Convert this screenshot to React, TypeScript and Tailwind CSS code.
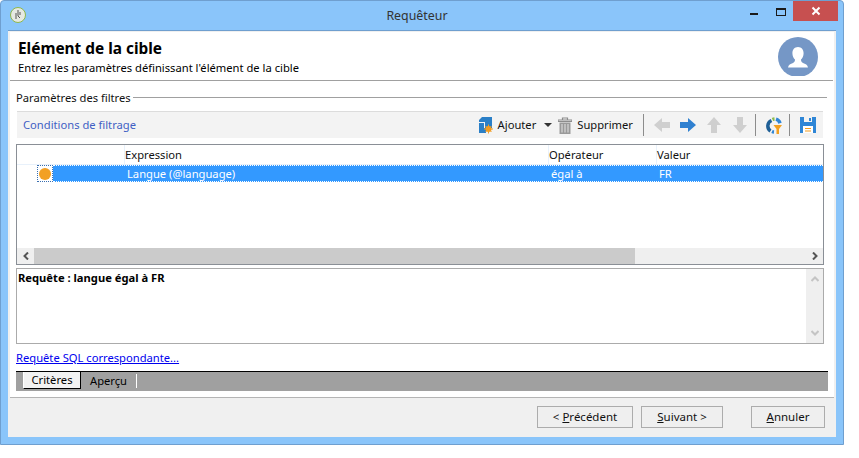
import React from "react";

function Arrow({ dir, color }: { dir: "l" | "r" | "u" | "d"; color: string }) {
  const rot = { r: 0, d: 90, l: 180, u: 270 }[dir];
  return (
    <svg width="16" height="16" viewBox="0 0 16 16" className="block">
      <polygon points="0,5 8,5 8,1 16,8 8,15 8,11 0,11" fill={color} transform={`rotate(${rot} 8 8)`} />
    </svg>
  );
}

function Sep() {
  return <div className="w-px h-[22px] bg-[#8c8c8c]" />;
}

function Btn({ w, children, ml }: { w: string; children: React.ReactNode; ml: string }) {
  return (
    <button className={`${w} ${ml} h-[22px] border border-[#acacac] bg-[#efefef] text-[11.5px] text-[#111] flex items-center justify-center`}>
      {children}
    </button>
  );
}

export default function App() {
  return (
    <div className="w-[859px] h-[458px] bg-white font-['Noto_Sans','Open_Sans',sans-serif] text-[11.2px] text-[#111] leading-none">
      <div className="w-[844px] h-[445px] rounded-t-[4px] border border-[#6f9fcf] bg-[#8ac5fa] flex flex-col">
        {/* title bar */}
        <div className="h-[29px] flex items-start shrink-0">
          <div className="ml-[9px] mt-[6px] w-4 h-4 rounded-full bg-[#e6e9e2] border border-[#8fb84a] flex items-center justify-center shrink-0">
            <svg width="10" height="12" viewBox="0 0 10 12"><path d="M3 4v6M5 1v6l2 2M7 3v3" stroke="#555" strokeWidth="1" fill="none" /></svg>
          </div>
          <div className="flex-1 text-center pt-[9px] text-[12.4px] text-[#333] pl-[58px]">Requêteur</div>
          <div className="flex items-start mr-[5px] shrink-0">
            <div className="w-[8px] h-[2px] bg-[#1a1a1a] mt-[12px] mr-[18px]" />
            <div className="w-[10px] h-[8px] border border-[#1a1a1a] border-t-2 mt-[7px] mr-[7px]" />
            <div className="w-[45px] h-[20px] bg-[#c75050] flex items-center justify-center">
              <svg width="10" height="10" viewBox="0 0 10 10"><path d="M1.500 1.500l7 7M8.500 1.500l-7 7" stroke="#fff" strokeWidth="2" /></svg>
            </div>
          </div>
        </div>
        {/* client */}
        <div className="mx-[7px] h-[407px] border-t border-[#6f9fcf] bg-[#f0f0f0] pt-px flex flex-col">
          <div className="mx-[2px] flex-1 bg-white flex flex-col">
            {/* header */}
            <div className="h-[49px] mr-px border-b border-[#a0a0a0] flex justify-between shrink-0">
              <div className="pl-[8px]">
                <div className="text-[15.400px] font-bold text-black pt-[9px]">Elément de la cible</div>
                <div className="text-black mt-[6px]">Entrez les paramètres définissant l'élément de la cible</div>
              </div>
              <div className="w-[40px] h-[39px] mt-[5px] mr-[15px] overflow-hidden">
                <svg width="40" height="40" viewBox="0 0 40 40">
                  <circle cx="20" cy="20" r="20" fill="#7597c6" />
                  <path d="M20 10c-3.600 0-5.600 2.800-5.600 6.200 0 2.600 1.200 5 2.600 6.400 0 1.600-.4 2.600-2 3.400-2.400 1-4.600 1.600-5 4.400h20c-.4-2.800-2.600-3.400-5-4.400-1.600-.8-2-1.800-2-3.400 1.400-1.400 2.600-3.800 2.600-6.400C25.600 12.800 23.600 10 20 10z" fill="#fff" />
                </svg>
              </div>
            </div>
            {/* fieldset title */}
            <div className="pl-[6px] pr-[7px] mt-[10px] flex items-center h-[13px] shrink-0">
              <span>Paramètres des filtres</span>
              <div className="flex-1 h-px bg-[#a0a0a0] ml-[2px]" />
            </div>
            {/* toolbar */}
            <div className="ml-[7px] mr-[11px] mt-[7px] h-[27px] border-t border-[#dcdcdc] bg-[#f3f3f3] flex items-center shrink-0">
              <span className="ml-[6px] text-[#3f5fc4] flex-1">Conditions de filtrage</span>
              <svg width="14" height="17" viewBox="0 0 14 17" className="mr-[5px]">
                <path d="M3 0h10v11H6V5H0V3z" fill="#2a7fc7" />
                <path d="M0 6h5v10H0z" fill="#2a7fc7" />
                <path d="M5 11h2v5H5z" fill="#2a7fc7" />
                <circle cx="9.500" cy="12" r="3" fill="#f39c1f" />
                <path d="M9.500 7.500v9M5 12h9M6.500 9l6 6M12.500 9l-6 6" stroke="#f39c1f" strokeWidth="1" />
              </svg>
              <span>Ajouter</span>
              <svg width="8" height="4" viewBox="0 0 8 4" className="ml-[8px] mr-[6px]"><polygon points="0,0 8,0 4,4" fill="#333" /></svg>
              <svg width="14" height="17" viewBox="0 0 14 17" className="mr-[5px]">
                <path d="M0 3h14v1.500H0zM4.500 3V1h5v2" fill="none" stroke="#8c8c8c" strokeWidth="1.200" />
                <path d="M1.500 5.500h11V17h-11z" fill="#9a9a9a" />
                <path d="M4 7v8.500M7 7v8.500M10 7v8.500" stroke="#e4e4e4" strokeWidth="1" />
              </svg>
              <span>Supprimer</span>
              <div className="ml-[10px] mr-[10px]"><Sep /></div>
              <div className="flex items-center gap-[10px] mr-[7px]">
                <Arrow dir="l" color="#cfcfcf" />
                <Arrow dir="r" color="#2f80d0" />
                <Arrow dir="u" color="#cfcfcf" />
                <Arrow dir="d" color="#cfcfcf" />
              </div>
              <Sep />
              <svg width="16" height="17" viewBox="0 0 16 17" className="ml-[10px] mr-[7px]">
                <path d="M5.500 3.500a6 6 0 0 0-1 10.500" fill="none" stroke="#1f5f96" strokeWidth="3.500" />
                <path d="M6.500 2.500a6 6 0 0 1 2-.5" fill="none" stroke="#8dbb4a" strokeWidth="3.500" />
                <path d="M10 2.200a6 6 0 0 1 4 4" fill="none" stroke="#2f86d6" strokeWidth="3.500" />
                <path d="M6 14.500a6 6 0 0 0 2 .5" fill="none" stroke="#2f86d6" strokeWidth="3.500" />
                <polygon points="7.500,8 16,8 13,12 13,17 10.500,17 10.500,12" fill="#f3a01f" />
              </svg>
              <Sep />
              <svg width="16" height="16" viewBox="0 0 16 16" className="ml-[10px] mr-[7px]">
                <path d="M0 0h16v16H0z" fill="#2f86d6" />
                <path d="M4 0h8v5H4z" fill="#f3f3f3" />
                <path d="M9 1h2v3H9z" fill="#2f86d6" />
                <path d="M3 9h10v7H3z" fill="#fff" />
                <path d="M5 11h6v1H5zM5 13.500h6v1H5z" fill="#f39c1f" />
              </svg>
            </div>
            {/* table */}
            <div className="ml-[6px] mr-[10px] mt-[6px] h-[121px] border border-[#8a8f96] flex flex-col shrink-0">
              <div className="h-[20px] flex items-center border-b border-[#e8f1fb] shrink-0">
                <div className="w-[108px] h-full border-r border-[#e8f1fb]" />
                <div className="w-[424px] h-full flex items-center border-r border-[#e8f1fb]">Expression</div>
                <div className="w-[108px] h-full flex items-center border-r border-[#e8f1fb]">Opérateur</div>
                <div>Valeur</div>
              </div>
              <div className="h-[17px] flex items-stretch shrink-0">
                <div className="w-[20px]" />
                <div className="w-[16px] border border-dotted border-[#3a6fb0] flex items-center justify-center">
                  <div className="w-[12px] h-[12px] rounded-full bg-[#f2a024]" />
                </div>
                <div className="flex-1 bg-[#3399ff] border-y border-dotted border-white text-white flex items-center">
                  <div className="w-[498px] pl-[74px] whitespace-nowrap">Langue (@language)</div>
                  <div className="w-[108px]">égal à</div>
                  <div>FR</div>
                </div>
              </div>
              <div className="flex-1" />
              <div className="h-[16px] bg-[#efefef] flex items-center shrink-0">
                <div className="w-[17px] flex justify-center">
                  <svg width="6" height="8" viewBox="0 0 6 8"><path d="M5 0.500L1.500 4 5 7.500" fill="none" stroke="#555" strokeWidth="2" /></svg>
                </div>
                <div className="w-[601px] h-full bg-[#cbcbcb]" />
                <div className="flex-1" />
                <div className="w-[17px] flex justify-center">
                  <svg width="6" height="8" viewBox="0 0 6 8"><path d="M1 0.500L4.500 4 1 7.500" fill="none" stroke="#555" strokeWidth="2" /></svg>
                </div>
              </div>
            </div>
            {/* query */}
            <div className="ml-[6px] mr-[10px] mt-[3px] h-[76px] border border-[#ababab] flex shrink-0">
              <div className="flex-1 pl-[1px] pt-[3px] font-bold text-black">Requête : langue égal à FR</div>
              <div className="w-[17px] bg-[#efefef] flex flex-col justify-between items-center py-[7px]">
                <svg width="8" height="6" viewBox="0 0 8 6"><path d="M0.500 5L4 1.500 7.500 5" fill="none" stroke="#c4c4c4" strokeWidth="2" /></svg>
                <svg width="8" height="6" viewBox="0 0 8 6"><path d="M0.500 1L4 4.500 7.500 1" fill="none" stroke="#c4c4c4" strokeWidth="2" /></svg>
              </div>
            </div>
            <div className="ml-[6px] mt-[7px] h-[13px] flex items-center shrink-0">
              <a className="text-[#0000ee] underline">Requête SQL correspondante...</a>
            </div>
            {/* tabs */}
            <div className="ml-[6px] mr-[6px] mt-[7px] h-[20px] bg-[#a0a0a0] border-t border-black flex items-start shrink-0">
              <div className="ml-[7px] w-[58px] h-[17px] bg-[#f2f2f2] border-l border-white border-r border-b border-r-black border-b-black flex items-center justify-center text-black">Critères</div>
              <div className="w-[56px] h-[14px] mt-[2px] border-r border-white flex items-center justify-center text-black">Aperçu</div>
            </div>
            {/* footer */}
            <div className="mt-[6px] flex-1 border-t border-[#b4b4b4] bg-[#f0f0f0] flex items-start pt-[8px]">
              <Btn w="w-[96px]" ml="ml-[527px]">&lt;&nbsp;<u>P</u>récédent</Btn>
              <Btn w="w-[82px]" ml="ml-[8px]"><u>S</u>uivant &gt;</Btn>
              <Btn w="w-[74px]" ml="ml-[28px]"><u>A</u>nnuler</Btn>
            </div>
          </div>
        </div>
      </div>
    </div>
  );
}
